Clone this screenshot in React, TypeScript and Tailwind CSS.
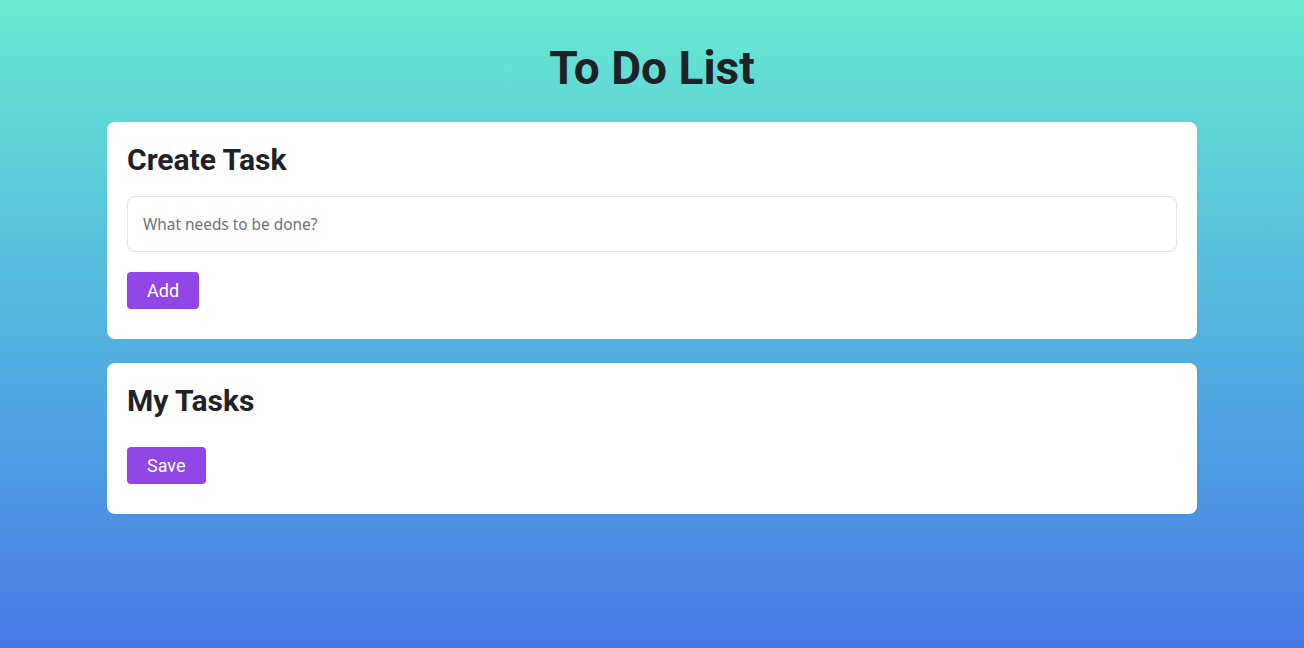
export default function App() {
  return (
    <div className="min-h-[648px] bg-gradient-to-b from-[#68eacf] to-[#4879e6] px-[107px] pt-[41px] pb-10 font-['Roboto',sans-serif] text-[#1f2128]">
      <h1 className="text-center text-[46px] font-bold leading-[54px]">To Do List</h1>

      <section className="mt-[27px] rounded-lg bg-white px-5 pt-5 pb-[30px]">
        <h2 className="text-[30px] font-bold leading-9">Create Task</h2>
        <input
          type="text"
          placeholder="What needs to be done?"
          className="mt-[18px] block h-14 w-full rounded-lg border border-[#e3e3e6] px-[15px] font-['Noto_Sans',sans-serif] text-[15.4px] outline-none placeholder:text-[#6f717a]"
        />
        <button className="mt-5 h-[37px] rounded bg-[#9146e6] px-5 text-lg text-white">Add</button>
      </section>

      <section className="mt-6 rounded-lg bg-white px-5 pt-5 pb-[30px]">
        <h2 className="text-[30px] font-bold leading-9">My Tasks</h2>
        <button className="mt-7 h-[37px] rounded bg-[#9146e6] px-5 text-lg text-white">Save</button>
      </section>
    </div>
  )
}
